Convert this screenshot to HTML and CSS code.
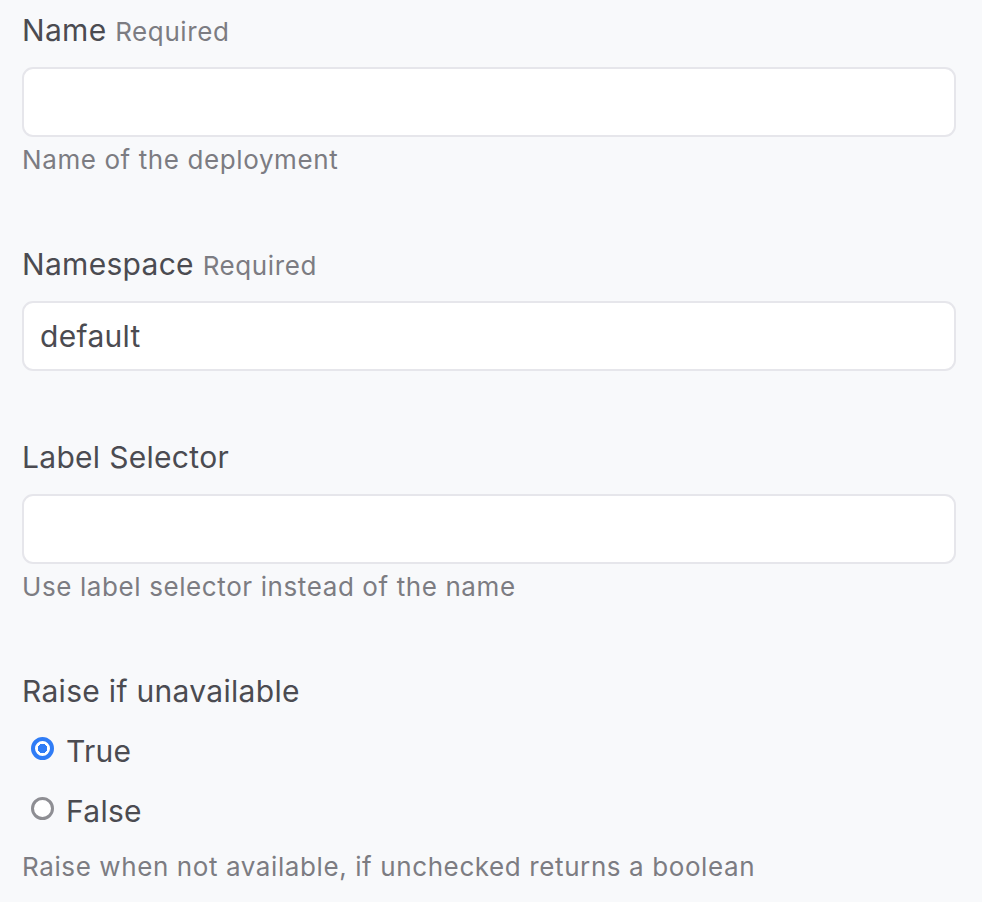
FILE: index.html
```html
<!DOCTYPE html>
<html>
<head>
<meta charset="utf-8">
<link rel="stylesheet" href="styles.css">
</head>
<body>
<form class="form">
  <div class="field">
    <label class="label">Name <span class="req">Required</span></label>
    <div class="input"></div>
    <div class="help">Name of the deployment</div>
  </div>
  <div class="field">
    <label class="label">Namespace <span class="req">Required</span></label>
    <div class="input">default</div>
  </div>
  <div class="field">
    <label class="label">Label Selector</label>
    <div class="input"></div>
    <div class="help">Use label selector instead of the name</div>
  </div>
  <div class="field">
    <label class="label">Raise if unavailable</label>
    <div class="radios">
      <div class="radio"><span class="dot checked"></span><span>True</span></div>
      <div class="radio"><span class="dot"></span><span>False</span></div>
    </div>
    <div class="help help-radio">Raise when not available, if unchecked returns a boolean</div>
  </div>
</form>
</body>
</html>
```

FILE: styles.css
```css
html, body {
  margin: 0;
  padding: 0;
  background: #f8f9fb;
}
body {
  font-family: Inter, "Noto Sans", sans-serif;
  color: #4b4b51;
}
.form {
  display: flex;
  flex-direction: column;
  gap: 68px;
  padding: 12px 26px 0 22px;
}
.field {
  display: flex;
  flex-direction: column;
}
.label {
  display: block;
  font-size: 30px;
  line-height: 36px;
  height: 36px;
  letter-spacing: 0.3px;
  color: #4b4b51;
}
.req {
  font-size: 26px;
  line-height: 1;
  letter-spacing: 0.6px;
  color: #7c7c82;
}
.input {
  margin-top: 19px;
  height: 66px;
  box-sizing: content-box;
  border: 2px solid #e6e6eb;
  border-radius: 11px;
  background: #fff;
  font-size: 30px;
  letter-spacing: 0.3px;
  line-height: 66px;
  padding: 0 16px;
  color: #4b4b51;
}
.help {
  margin-top: 5px;
  font-size: 26px;
  letter-spacing: 0.6px;
  line-height: 36px;
  color: #7c7c82;
}
.radios {
  display: flex;
  flex-direction: column;
  gap: 20px;
  margin-top: 22px;
  padding-left: 9px;
}
.radio {
  display: flex;
  align-items: center;
  gap: 12px;
  height: 40px;
  font-size: 30px;
  letter-spacing: 0.3px;
}
.dot {
  flex: none;
  width: 23px;
  height: 23px;
  margin-bottom: 6px;
  box-sizing: border-box;
  border-radius: 50%;
  border: 3.5px solid #8e8e93;
  background: #fff;
}
.dot.checked {
  border: 4.5px solid #2f7cf6;
  background: radial-gradient(circle, #2f7cf6 0 4.5px, #fff 5px);
}
.help-radio {
  margin-top: 18px;
}
```
